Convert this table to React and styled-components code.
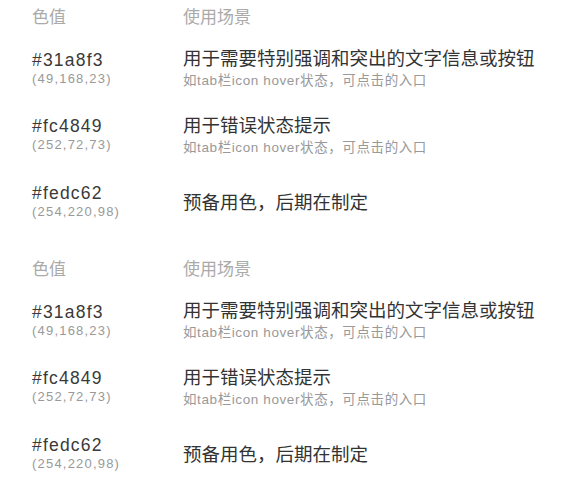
import React from "react";
import styled, { createGlobalStyle } from "styled-components";

const Global = createGlobalStyle`
  html, body { margin: 0; padding: 0; background: #fff; }
  body { font-family: "Liberation Sans", "Noto Sans CJK SC", sans-serif; }
`;

const Page = styled.div`
  width: 565px;
  height: 485px;
  overflow: hidden;
  background: #fff;
`;

const Section = styled.section`
  padding: 0 0 17.5px 32px;
`;

const Grid = styled.div`
  display: grid;
  grid-template-columns: 151px 1fr;
  align-items: center;
  height: ${(p) => p.$h}px;
  margin-bottom: ${(p) => p.$mb || 0}px;
`;

const HeadCell = styled.div`
  font-family: "Noto Sans CJK SC", sans-serif;
  font-size: 17px;
  line-height: 31px;
  color: #aaa;
`;

const Hex = styled.div`
  font-family: "Liberation Sans", sans-serif;
  font-size: 17.5px;
  letter-spacing: 1.2px;
  line-height: 20px;
  color: #3a3a3a;
`;

const Rgb = styled.div`
  font-family: "Liberation Sans", sans-serif;
  font-size: 13px;
  letter-spacing: 1.2px;
  line-height: 17px;
  color: #999;
`;

const Main = styled.div`
  font-family: "Noto Sans CJK SC", sans-serif;
  font-size: 18.5px;
  line-height: 26px;
  color: #333;
`;

const Sub = styled.div`
  font-family: "Liberation Sans", "Noto Sans CJK SC", sans-serif;
  font-size: 13.5px;
  letter-spacing: 0.6px;
  line-height: 22px;
  color: #999;
`;

const rows = [
  { hex: "#31a8f3", rgb: "(49,168,23)", main: "用于需要特别强调和突出的文字信息或按钮", sub: "如tab栏icon hover状态，可点击的入口" },
  { hex: "#fc4849", rgb: "(252,72,73)", main: "用于错误状态提示", sub: "如tab栏icon hover状态，可点击的入口" },
  { hex: "#fedc62", rgb: "(254,220,98)", main: "预备用色，后期在制定" },
];

function ColorTable() {
  return (
    <Section>
      <Grid $h={31} $mb={4}>
        <HeadCell>色值</HeadCell>
        <HeadCell>使用场景</HeadCell>
      </Grid>
      {rows.map((r) => (
        <Grid key={r.hex} $h={66.5}>
          <div>
            <Hex>{r.hex}</Hex>
            <Rgb>{r.rgb}</Rgb>
          </div>
          <div>
            <Main>{r.main}</Main>
            {r.sub && <Sub>{r.sub}</Sub>}
          </div>
        </Grid>
      ))}
    </Section>
  );
}

export default function App() {
  return (
    <Page>
      <Global />
      <ColorTable />
      <ColorTable />
    </Page>
  );
}
